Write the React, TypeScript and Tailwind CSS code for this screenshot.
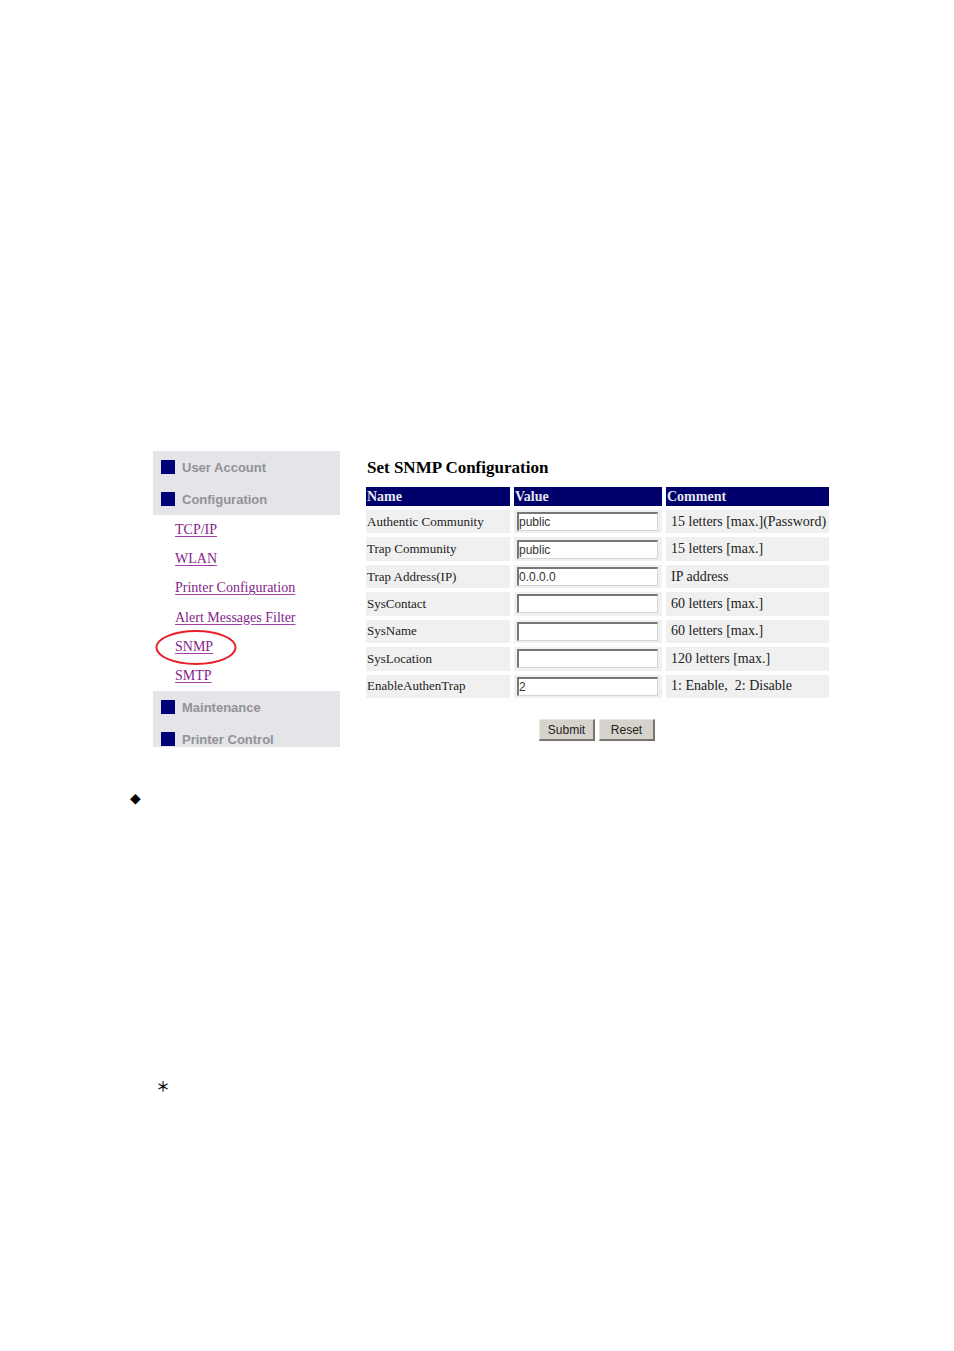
import type { ReactNode } from "react"

const links = ["TCP/IP", "WLAN", "Printer Configuration", "Alert Messages Filter", "SNMP", "SMTP"]

const fields = [
  { name: "Authentic Community", value: "public", comment: "15 letters [max.](Password)" },
  { name: "Trap Community", value: "public", comment: "15 letters [max.]" },
  { name: "Trap Address(IP)", value: "0.0.0.0", comment: "IP address" },
  { name: "SysContact", value: "", comment: "60 letters [max.]" },
  { name: "SysName", value: "", comment: "60 letters [max.]" },
  { name: "SysLocation", value: "", comment: "120 letters [max.]" },
  { name: "EnableAuthenTrap", value: "2", comment: "1: Enable,\u00a0 2: Disable" },
]

function MenuHeading({ children }: { children: ReactNode }) {
  return (
    <div className="flex h-8 items-center gap-[7px] pl-2 font-['Liberation_Sans',sans-serif] text-[13px] font-bold text-[#929297]">
      <span className="size-3.5 bg-[#000078]" />
      <span className="pt-0.5">{children}</span>
    </div>
  )
}

function Sidebar() {
  return (
    <nav className="w-[187px] shrink-0">
      <div className="h-16 bg-[#e4e4e9]">
        <MenuHeading>User Account</MenuHeading>
        <MenuHeading>Configuration</MenuHeading>
      </div>
      <ul className="flex h-[176px] flex-col pl-[22px]">
        {links.map((label) => (
          <li key={label} className="flex flex-1 items-center">
            <a href="#" className="relative text-sm text-[#84248a] underline decoration-[#a040a8] underline-offset-2">
              {label}
              {label === "SNMP" && (
                <svg
                  className="pointer-events-none absolute -top-2 -left-5 h-9 w-[82px]"
                  viewBox="0 0 82 36"
                  fill="none"
                  stroke="#e8202a"
                  strokeWidth="2"
                >
                  <ellipse cx="41" cy="18.5" rx="39.5" ry="16.5" />
                </svg>
              )}
            </a>
          </li>
        ))}
      </ul>
      <div className="h-14 overflow-hidden bg-[#e4e4e9]">
        <MenuHeading>Maintenance</MenuHeading>
        <MenuHeading>Printer Control</MenuHeading>
      </div>
    </nav>
  )
}

function FormButton({ type, children }: { type: "submit" | "reset"; children: ReactNode }) {
  return (
    <button
      type={type}
      className="h-[22px] w-14 border border-t-[#e8e6e2] border-r-2 border-b-2 border-l-[#e8e6e2] border-r-[#77746f] border-b-[#77746f] bg-[#d6d3cc] font-['Liberation_Sans',sans-serif] text-xs leading-none text-[#222]"
    >
      {children}
    </button>
  )
}

function SnmpForm() {
  return (
    <form className="min-w-0 flex-1" onSubmit={(e) => e.preventDefault()}>
      <h1 className="px-[5px] pt-1.5 text-[17px] leading-[22px] font-bold text-black">Set SNMP Configuration</h1>
      <table className="mt-1 h-[219px] w-full table-fixed border-separate border-spacing-1 text-left">
        <thead>
          <tr className="h-[19px] bg-[#00006c] text-sm leading-[19px] text-[#e6e6ee]">
            <th className="w-[144px] pl-px font-bold">Name</th>
            <th className="w-[148px] pl-px font-bold">Value</th>
            <th className="pl-px font-bold">Comment</th>
          </tr>
        </thead>
        <tbody>
          {fields.map(({ name, value, comment }) => (
            <tr key={name} className="leading-5 text-[#222]">
              <td className="bg-[#f0f0f0] pl-px text-[13px]">
                <label htmlFor={name}>{name}</label>
              </td>
              <td className="bg-[#f0f0f0] px-[3px]">
                <input
                  id={name}
                  type="text"
                  defaultValue={value}
                  className="block h-[19px] w-[141px] border border-t-2 border-l-2 border-t-[#777] border-r-[#d4d4d4] border-b-[#d4d4d4] border-l-[#777] bg-white font-['Liberation_Sans',sans-serif] text-xs text-[#333]"
                />
              </td>
              <td className="bg-[#f0f0f0] pl-[5px] text-sm leading-5 whitespace-nowrap">{comment}</td>
            </tr>
          ))}
        </tbody>
      </table>
      <div className="mt-[17px] flex gap-1 pl-[177px]">
        <FormButton type="submit">Submit</FormButton>
        <FormButton type="reset">Reset</FormButton>
      </div>
    </form>
  )
}

export default function App() {
  return (
    <div className="min-h-screen bg-white pt-[451px] font-['Liberation_Serif',serif] text-black">
      <div className="flex gap-[22px] pr-[121px] pl-[153px]">
        <Sidebar />
        <SnmpForm />
      </div>
      <p className="pt-[41px] pl-[130px] font-['DejaVu_Sans',sans-serif] text-sm leading-5">◆</p>
      <p className="pt-[267px] pl-[156px] font-['Noto_Sans_CJK_JP',sans-serif] text-sm leading-5 font-medium">＊</p>
    </div>
  )
}
